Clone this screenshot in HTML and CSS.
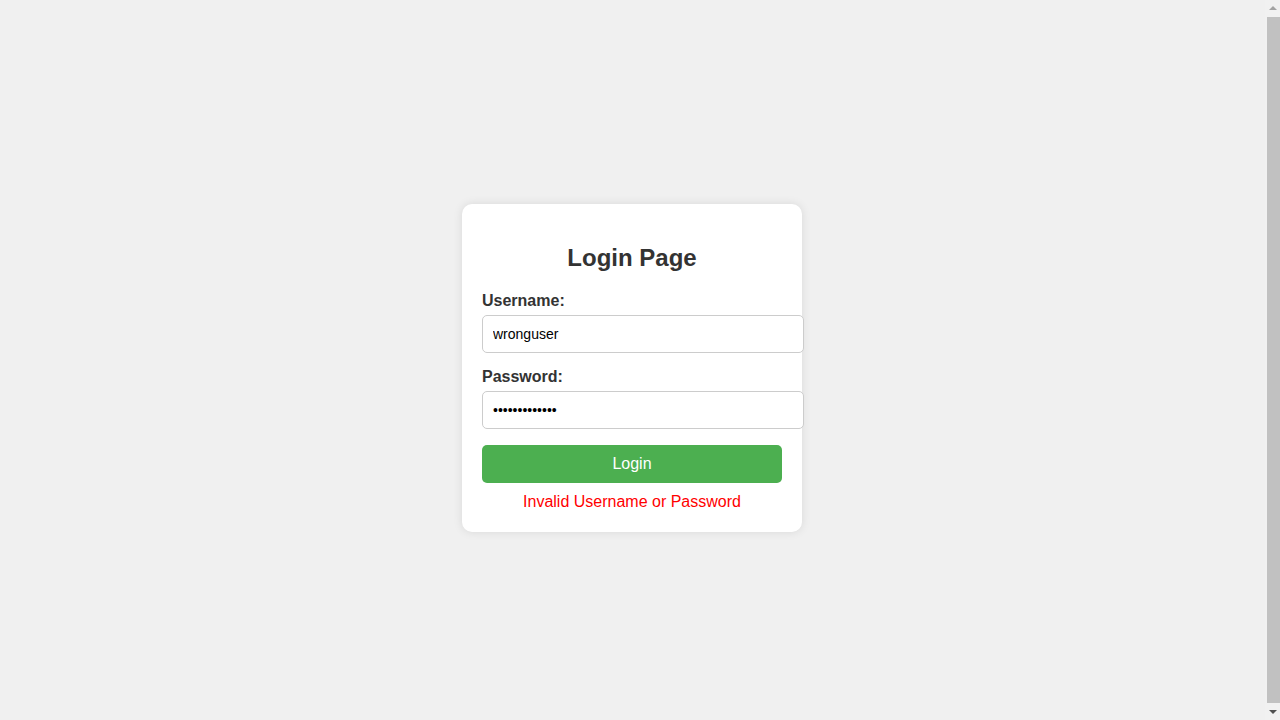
FILE: index.html
```html
<!DOCTYPE html>
<html lang="en">
<head>
<meta charset="UTF-8">
<title>Login Page</title>
<link rel="stylesheet" href="styles.css">
</head>
<body>
<div class="login-container">
  <h2 class="title">Login Page</h2>
  <form class="login-form">
    <label class="field-label" for="username">Username:</label>
    <input class="field-input" type="text" id="username" value="wronguser">
    <label class="field-label" for="password">Password:</label>
    <input class="field-input" type="password" id="password" value="wrongpassword">
    <button class="login-button" type="button">Login</button>
  </form>
  <div class="error-message">Invalid Username or Password</div>
</div>
<div class="fake-scrollbar" aria-hidden="true">
  <span class="arrow arrow-up"></span>
  <span class="thumb"></span>
  <span class="arrow arrow-down"></span>
</div>
</body>
</html>
```

FILE: styles.css
```css
body {
  font-family: "Liberation Sans", Arial, sans-serif;
  background-color: #f0f0f0;
  display: flex;
  justify-content: center;
  align-items: center;
  height: 100vh;
  margin: 8px 24px 8px 8px;
}

.login-container {
  background-color: #fff;
  padding: 20px 20px 21px;
  border-radius: 10px;
  box-shadow: 0 0 10px rgba(0, 0, 0, 0.1);
  width: 300px;
}

.title {
  text-align: center;
  color: #333;
  font-size: 24px;
  margin: 19.92px 0;
}

.login-form {
  margin: 0;
}

.field-label {
  display: block;
  font-weight: bold;
  color: #333;
  margin-bottom: 5px;
}

.field-input {
  width: 100%;
  padding: 10px;
  margin: 0 0 15px 0;
  border: 1px solid #ccc;
  border-radius: 5px;
  font-family: "Liberation Sans", Arial, sans-serif;
  font-size: 14px;
  color: #000;
}

.login-button {
  width: 100%;
  margin-top: 1px;
  padding: 10px;
  background-color: #4CAF50;
  color: #fff;
  border: none;
  border-radius: 5px;
  font-family: "Liberation Sans", Arial, sans-serif;
  font-size: 16px;
  cursor: pointer;
}

.error-message {
  color: red;
  text-align: center;
  margin-top: 10px;
}

/* Imitation of the browser's classic scrollbar */
.fake-scrollbar {
  position: fixed;
  top: 0;
  right: 0;
  width: 15px;
  height: 100vh;
  background-color: #f1f1f1;
  display: flex;
  flex-direction: column;
  align-items: center;
  box-sizing: border-box;
}

.arrow {
  width: 0;
  height: 0;
  border-left: 4px solid transparent;
  border-right: 4px solid transparent;
  flex: none;
}

.arrow-up {
  margin: 6px 0 6px;
  border-bottom: 4px solid #a3a3a3;
}

.arrow-down {
  margin: 6px 0 6px;
  border-top: 4px solid #505050;
}

.thumb {
  flex: 1;
  width: 13px;
  margin: 1px 0 1px 1px;
  background-color: #c1c1c1;
}
```
